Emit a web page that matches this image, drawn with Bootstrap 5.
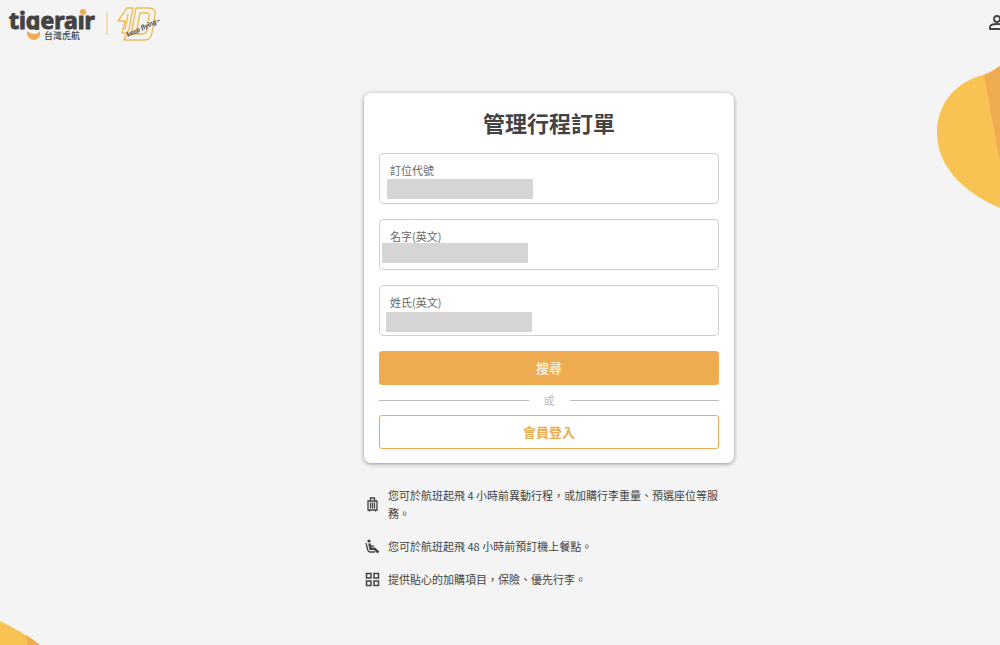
<!DOCTYPE html>
<html lang="zh-Hant">
<head>
<meta charset="utf-8">
<meta name="viewport" content="width=device-width, initial-scale=1">
<title>管理行程訂單</title>
<link href="https://cdn.jsdelivr.net/npm/bootstrap@5.3.0/dist/css/bootstrap.min.css" rel="stylesheet">
<style>
  :root { --ink: #434343; --brand: #eeab4f; --page: #f4f4f4; }
  body { background: var(--page); color: var(--ink); font-family: "Noto Sans CJK TC", sans-serif; font-size: 11px; line-height: 18px; overflow-x: hidden; }
  .site-header { padding: 4px 0 0 8px; margin-right: -6px; }
  .user-link { color: var(--ink); padding-top: 8px; }
  .blob-right { top: 64px; }
  .booking-wrap { padding: 49px 0 0 98px; }
  .booking-col { width: 370px; max-width: 100%; }
  .booking-card { border: 0; border-radius: 7px; padding: 14px 15px; box-shadow: 0 1px 4px rgba(0,0,0,.4); }
  .booking-title { font-size: 22px; line-height: 30px; font-weight: 700; margin-bottom: 16px; color: var(--ink); }
  .booking-form { gap: 15px; }
  .field .form-control { height: 51px; padding: 24px 10px 4px; border: 1px solid #d0d0d0; border-radius: 4px; font-size: 11px; }
  .field label { position: absolute; top: 8px; left: 11px; color: #666; }
  .veil { position: absolute; width: 146px; height: 20px; background: #d5d5d5; }
  .veil-code { left: 8px; top: 26px; }
  .veil-first { left: 3px; top: 24px; }
  .veil-last { left: 7px; top: 27px; }
  .action { height: 34px; padding: 0; border-radius: 3px; font-size: 13px; line-height: 20px; font-weight: 500; border-color: var(--brand); }
  .action-fill, .action-fill:hover { background: var(--brand); color: #fff6e4; }
  .action-line { color: var(--brand); font-weight: 700; }
  .divider { height: 30px; gap: 15px; color: #b8b8bc; }
  .divider hr { margin: 0; border-color: #bdbdbd; opacity: 1; }
  .notes { margin: 23px 0 0 1px; gap: 15px; }
  .notes li { gap: 8px; padding-right: 10px; }
</style>
</head>
<body>
<svg class="blob-right position-absolute end-0" width="64" height="146" viewBox="0 0 64 146" aria-hidden="true">
  <path d="M64 2C56 7 54 9 47 11C20 18 1 39 1 69C1 102 27 128 64 144Z" fill="#f8c353"/>
  <path d="M64 2C58 6 54 9 48 11L64 97Z" fill="#eeab4f"/>
</svg>
<svg class="position-absolute bottom-0 start-0" width="42" height="25" viewBox="0 0 42 25" aria-hidden="true">
  <path d="M0 1Q21 11 40 25H0Z" fill="#f8c353"/><path d="M26 15Q34 20 40 25H28Z" fill="#eeab4f"/>
</svg>

<header class="site-header d-flex justify-content-between align-items-start">
  <a href="#" class="d-flex" aria-label="tigerair 台灣虎航">
    <svg width="156" height="40" viewBox="8 4 156 40">
      <text x="9" y="29" font-family="Noto Sans" font-weight="700" font-size="23" fill="#434343" stroke="#434343" stroke-width="1">tigerair</text>
      <path d="M26 30H41V40H26ZM77 7H87V15H77Z" fill="#f4f4f4"/>
      <circle cx="83" cy="12" r="3" fill="#eeab4f"/>
      <path d="M27 31Q30 34 34 34T40 31C41 36 38 40 34 40S26 36 27 31Z" fill="#eeab4f"/>
      <text x="44" y="39" font-family="Noto Sans CJK TC" font-weight="500" font-size="9" fill="#434343">台灣虎航</text>
      <path d="M107 12V35" stroke="#efc783"/>
      <g fill="none" stroke="#efbd55" stroke-width="1.4" stroke-linejoin="round">
        <path d="M118 21L127 8H133L129 29L124 40H144Q151 40 152 33L155 15Q156 8 149 8H136L131 34H142Q146 34 147 30L149 17Q150 13 147 13H140L136 34"/>
        <path d="M118 21H125L122 33H127L124 40M128 14L125 30"/>
      </g>
      <text x="128" y="37" transform="rotate(-25 128 37)" font-family="Lato" font-style="italic" font-weight="700" font-size="7" fill="#434343">keep flying~</text>
    </svg>
  </a>
  <a href="#" class="user-link d-flex" aria-label="會員">
    <svg width="18" height="18" viewBox="0 0 18 18" fill="none" stroke="currentColor" stroke-width="1.8"><circle cx="9" cy="7" r="3"/><path d="M2 17V15Q2 12 9 12T16 15V17Z"/></svg>
  </a>
</header>

<main class="booking-wrap d-flex justify-content-center">
  <div class="booking-col">
    <section class="card booking-card">
      <h1 class="booking-title text-center">管理行程訂單</h1>
      <form class="booking-form d-flex flex-column">
        <div class="field position-relative"><input class="form-control" id="code"><label for="code">訂位代號</label><span class="veil veil-code"></span></div>
        <div class="field position-relative"><input class="form-control" id="first"><label for="first">名字(英文)</label><span class="veil veil-first"></span></div>
        <div class="field position-relative"><input class="form-control" id="last"><label for="last">姓氏(英文)</label><span class="veil veil-last"></span></div>
        <button type="submit" class="btn action action-fill w-100">搜尋</button>
      </form>
      <div class="divider d-flex align-items-center"><hr class="flex-fill"><span>或</span><hr class="flex-fill"></div>
      <button type="button" class="btn action action-line w-100">會員登入</button>
    </section>
    <ul class="notes list-unstyled d-flex flex-column">
      <li class="d-flex align-items-center">
        <svg class="flex-shrink-0" width="15" height="15" viewBox="0 0 15 15" fill="none" stroke="currentColor" stroke-width="1.3"><path d="M5.500 4V1H9.500V4M3 4H12V13H3ZM5.500 5.500V11.500M7.500 5.500V11.500M9.500 5.500V11.500M4.500 13V14.500M10.500 13V14.500"/></svg>
        <span>您可於航班起飛 4 小時前異動行程，或加購行李重量、預選座位等服務。</span>
      </li>
      <li class="d-flex align-items-center">
        <svg class="flex-shrink-0" width="15" height="15" viewBox="0 0 15 15" fill="none" stroke="currentColor"><circle cx="4" cy="2" r="1.600" fill="currentColor" stroke="none"/><path d="M1 4L2.500 10Q3 13 5 13H10" stroke-width="1.3"/><path d="M4.500 4.500L5.500 9.800H9.500L13.500 13.500" stroke-width="2.4"/><path d="M5 7H9" stroke-width="1.4"/></svg>
        <span>您可於航班起飛 48 小時前預訂機上餐點。</span>
      </li>
      <li class="d-flex align-items-center">
        <svg class="flex-shrink-0" width="15" height="15" viewBox="0 0 15 15" fill="none" stroke="currentColor" stroke-width="1.5"><path d="M1.500 1.500H6V6H1.500ZM9 1.500H13.500V6H9ZM1.500 9H6V13.500H1.500ZM9 9H13.500V13.500H9Z"/></svg>
        <span>提供貼心的加購項目，保險、優先行李。</span>
      </li>
    </ul>
  </div>
</main>
<script src="https://cdn.jsdelivr.net/npm/bootstrap@5.3.0/dist/js/bootstrap.bundle.min.js"></script>
</body>
</html>
